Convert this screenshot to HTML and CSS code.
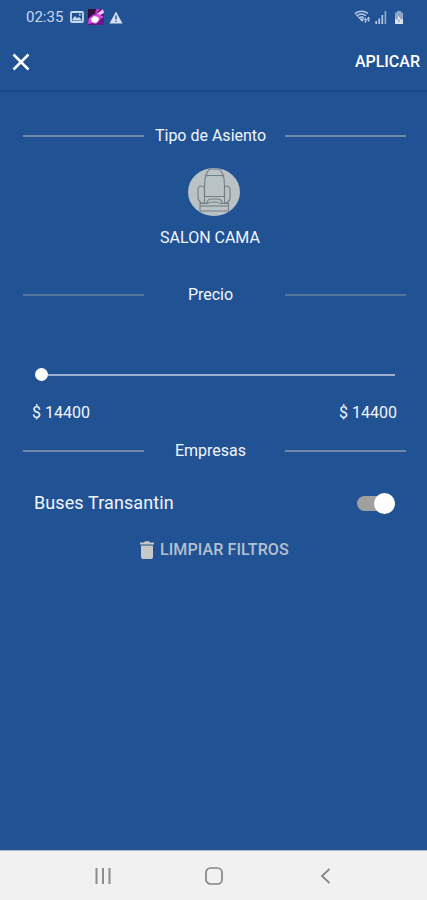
FILE: index.html
```html
<!DOCTYPE html>
<html lang="es">
<head>
    <meta charset="UTF-8">
    <meta name="viewport" content="width=device-width, initial-scale=1.0">
    <title>Filtros</title>
    <link rel="stylesheet" href="styles.css">
</head>
<body>
    <div class="status-bar">
        <span class="time">02:35</span>
        <svg class="icon-image" width="14" height="12" viewBox="0 0 14 12">
            <rect x="1" y="1" width="12" height="10" rx="1" fill="none" stroke="#c6d9ef" stroke-width="1.8"/>
            <path d="M2.5 9.5V8l2.5-3 2 2.2L9 6l2.5 2.5v1z" fill="#c6d9ef"/>
            <circle cx="9.8" cy="3.8" r="1" fill="#c6d9ef"/>
        </svg>
        <svg class="icon-app" width="16" height="16" viewBox="0 0 16 16">
            <rect width="16" height="16" fill="#5a1a80"/>
            <path d="M0 0h8v5H4v4H0z" fill="#321039"/>
            <path d="M8 0h4L9 5H7z" fill="#b43bc0"/>
            <path d="M15 0l-6 5 1 2 6-3z" fill="#f3c8ff"/>
            <path d="M1 9l4-3 5-1 4 2 2 1-4 2 2 4-4-1-2 2-4-1-4 1z" fill="#d94bdc"/>
            <path d="M3 10l3-3 4 1 1 3-3 3-4-1z" fill="#fff"/>
            <path d="M11 11h5v5h-6z" fill="#72149a"/>
        </svg>
        <svg class="icon-alert" width="14" height="13" viewBox="0 0 14 13">
            <path d="M7 .5L13.5 12.5H.5z" fill="#d3e1f3"/>
            <path d="M7 4.5v4M7 9.7v1.4" stroke="#285493" stroke-width="1.4"/>
        </svg>
        <div class="status-right">
            <svg width="17" height="14" viewBox="0 0 17 14">
                <g fill="none" stroke="#b9cbe4" stroke-width="1.4">
                    <path d="M1 3.3Q7.5-.9 14 3.3M2.8 5.7Q7.5 2.3 12 5.7M5 8Q7.5 6 10 8"/>
                    <path d="M1 3.3L8 11" stroke-width="1"/>
                </g>
                <path d="M6 8.5h4L8 12zM10 10l1.5-2.5L13 10zM10 10.500h3L11.500 13zM13 9l1.500-2.500L16 9zM13 9.500h3L14.500 12z" fill="#c6d5ea"/>
            </svg>
            <svg class="icon-signal" width="12" height="13" viewBox="0 0 12 13">
                <path d="M1.2 13v-3M4.2 13V7.5M7.3 13V4" stroke="#b5c8e2" stroke-width="1.7"/>
                <path d="M10.400 13V0" stroke="#8fa9ce" stroke-width="1.7"/>
            </svg>
            <svg class="icon-battery" width="10" height="13" viewBox="0 0 10 13">
                <path d="M3 0h4v1.500h2V13H1V1.500h2z" fill="#8fa8cc"/>
                <path d="M1 8h8v5H1z" fill="#d8e3f1"/>
                <path d="M5.200 3L3 8h1.700v3L7.200 6.500H5.500z" fill="#fff" stroke="#5a76a2" stroke-width=".5"/>
            </svg>
        </div>
    </div>

    <header class="app-bar">
        <button class="close" type="button" aria-label="Cerrar">
            <svg width="18" height="18" viewBox="0 0 18 18">
                <path d="M1.500 1.500l15 15M16.500 1.500l-15 15" stroke="#fff" stroke-width="2.500"/>
            </svg>
        </button>
        <button class="apply" type="button">APLICAR</button>
    </header>

    <main class="filters">
        <h2 class="divider"><span>Tipo de Asiento</span></h2>
        <div class="seat">
            <svg width="52" height="48" viewBox="0 0 52 48">
                <ellipse cx="26" cy="24" rx="26" ry="24" fill="#b9c2c5"/>
                <g fill="none" stroke="#747e85" stroke-width="1.1">
                    <path d="M17.500 7.500L20 3q1-2 3-2h7q2 0 3 2l2.500 4.500z"/>
                    <path d="M16.500 19l.5-8.500q.2-3 3-3h13q2.800 0 3 3l.5 8.500v9.500h-20z"/>
                    <path d="M16.500 35h-3q-3.500-2-3.500-5v-8q0-4 3.300-4t3.200 4zM36.500 35h2q3.500-2 3.500-5v-8q0-4-3-4t-2.500 4z"/>
                    <path d="M18.500 35.500q1-4 4-4.500h8q3 .5 4 4.500"/>
                    <path d="M12 35.500h7q6.500-3 14 0h7.500V43H12z"/>
                    <path d="M12 38h28.500"/>
                </g>
            </svg>
            <span>SALON CAMA</span>
        </div>

        <h2 class="divider faint"><span>Precio</span></h2>
        <div class="slider">
            <div class="thumb"></div>
            <div class="track"></div>
        </div>
        <div class="prices">
            <span>$ 14400</span>
            <span>$ 14400</span>
        </div>

        <h2 class="divider"><span>Empresas</span></h2>
        <div class="company">
            <span>Buses Transantin</span>
            <div class="switch"><div class="knob"></div></div>
        </div>
        <button class="clear" type="button">
            <svg width="14" height="18" viewBox="0 0 14 18">
                <path d="M0 1.500h4L5 .3h4l1 1.200h4v2H0zM1 4.500h12V16q0 2-2 2H3q-2 0-2-2z" fill="#c8c8c8"/>
            </svg>
            <span>LIMPIAR FILTROS</span>
        </button>
    </main>

    <nav class="nav-bar">
        <svg width="18" height="16" viewBox="0 0 18 16">
            <path d="M2.500 0v16M9 0v16M15.500 0v16" stroke="#8c8c8c" stroke-width="2"/>
        </svg>
        <svg width="18" height="18" viewBox="0 0 18 18">
            <rect x="1" y="1" width="16" height="16" rx="4.500" fill="none" stroke="#858585" stroke-width="1.700"/>
        </svg>
        <svg width="18" height="16" viewBox="0 0 18 16">
            <path d="M13.500 1L6 8l7.500 7" fill="none" stroke="#858585" stroke-width="1.800"/>
        </svg>
    </nav>
</body>
</html>
```
FILE: styles.css
```css
* {
    box-sizing: border-box;
}
body {
    margin: 0;
    height: 900px;
    display: flex;
    flex-direction: column;
    background-color: #215294;
    font-family: Roboto, sans-serif;
    font-size: 16px;
    line-height: 20px;
    color: #f1f6fc;
    overflow: hidden;
}
svg {
    display: block;
    flex: none;
}
button {
    padding: 0;
    border: none;
    background: none;
    font: inherit;
    color: inherit;
    cursor: pointer;
}
.status-bar {
    height: 34px;
    display: flex;
    align-items: center;
    padding: 0 23px 0 26px;
}
.time {
    width: 44px;
    font-size: 15px;
    color: #c6d9ef;
}
.icon-app {
    margin-left: 4px;
}
.icon-alert {
    margin-left: 5px;
}
.status-right {
    display: flex;
    align-items: center;
    margin-left: auto;
}
.icon-signal {
    margin-left: 4px;
}
.icon-battery {
    margin-left: 7px;
}
.app-bar {
    height: 58px;
    display: flex;
    align-items: center;
    justify-content: space-between;
    padding: 0 7px 0 12px;
    border-bottom: 2px solid #1c4887;
}
.apply {
    font-weight: 500;
    color: #fff;
}
.filters {
    flex: 1;
    display: flex;
    flex-direction: column;
    padding-top: 34px;
}
.divider {
    height: 20px;
    margin: 0 21px 0 23px;
    display: grid;
    grid-template-columns: 121px 1fr 121px;
    align-items: center;
    font-size: 16px;
    font-weight: 400;
    text-align: center;
}
.divider::before,
.divider::after {
    content: "";
    height: 2px;
    background-color: #7189a9;
}
.divider.faint::before,
.divider.faint::after {
    background-color: #54769f;
}
.divider span {
    padding-right: 8px;
}
.seat {
    height: 139px;
    padding-top: 22px;
    display: flex;
    flex-direction: column;
    align-items: center;
    gap: 12px;
}
.seat span {
    margin-right: 7px;
}
.slider {
    height: 98px;
    padding: 41px 32px 0 35px;
    display: flex;
    align-items: center;
}
.thumb {
    width: 13px;
    height: 13px;
    border-radius: 50%;
    background-color: #fff;
}
.track {
    flex: 1;
    height: 2px;
    background-color: #a0b1d0;
}
.prices {
    display: flex;
    justify-content: space-between;
    height: 38px;
    padding: 0 30px 0 32px;
}
.company {
    height: 44px;
    margin-top: 20px;
    padding: 0 32px 0 34px;
    display: flex;
    align-items: center;
    justify-content: space-between;
    font-size: 18px;
    letter-spacing: 0.1px;
}
.switch {
    width: 38px;
    height: 15px;
    border-radius: 8px;
    display: flex;
    align-items: center;
    justify-content: flex-end;
    background-color: #a0a0a0;
}
.knob {
    width: 21px;
    height: 21px;
    border-radius: 50%;
    background-color: #fff;
    flex: none;
}
.clear {
    display: flex;
    align-items: center;
    gap: 6px;
    margin: 15px 0 0 140px;
    font-weight: 500;
    letter-spacing: 0.1px;
    color: #b5c0cf;
}
.nav-bar {
    height: 50px;
    display: grid;
    grid-template-columns: repeat(3, 18px);
    column-gap: 93px;
    justify-content: center;
    align-items: center;
    border-top: 1px solid #a9b9d0;
    background-color: #f1f1f1;
}
```
